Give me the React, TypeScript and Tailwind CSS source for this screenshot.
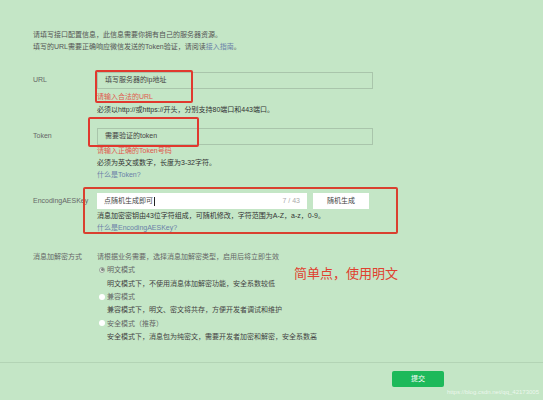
import React from "react";

function Radio({ checked, label }: { checked?: boolean; label: string }) {
  return (
    <div className="flex h-[13.33px] items-center">
      {checked ? (
        <span className="flex h-[6px] w-[6px] items-center justify-center rounded-full border border-[#9aa69b] bg-[#e8f1e8]">
          <span className="h-[3px] w-[3px] rounded-full bg-[#7c857d]" />
        </span>
      ) : (
        <span className="h-[6px] w-[6px] rounded-full bg-white" />
      )}
      <span className="ml-[2px] text-[#666]">{label}</span>
    </div>
  );
}

export default function App() {
  return (
    <div
      className="relative h-[400px] w-[543px] overflow-hidden bg-[#c4e6c6] text-[7px] text-[#444]"
      style={{ fontFamily: '"Liberation Sans", "Noto Sans CJK SC", sans-serif' }}
    >
      <div className="pl-[33px] pt-[29px]">
        {/* intro */}
        <div className="leading-[12px] text-[#555]">
          <p>请填写接口配置信息，此信息需要你拥有自己的服务器资源。</p>
          <p>
            填写的URL需要正确响应微信发送的Token验证，请阅读
            <span className="text-[#6a7fa8]">接入指南</span>。
          </p>
        </div>

        {/* URL */}
        <div className="mt-[19px] flex">
          <div className="flex h-[17px] w-[64px] items-center text-[#666]">URL</div>
          <div>
            <div className="flex h-[17px] w-[276px] items-center border border-[#a9c5ab] pl-[7px] text-[#444]">
              填写服务器的ip地址
            </div>
            <p className="mt-[2px] leading-[12px] text-[#e0594e]">请输入合法的URL</p>
            <p className="mt-[1px] leading-[12px] text-[#333]">
              必须以http://或https://开头，分别支持80端口和443端口。
            </p>
          </div>
        </div>

        {/* Token */}
        <div className="mt-[12px] flex">
          <div className="flex h-[17px] w-[64px] items-center text-[#666]">Token</div>
          <div>
            <div className="flex h-[17px] w-[276px] items-center border border-[#a9c5ab] pl-[7px] text-[#444]">
              需要验证的token
            </div>
            <div className="leading-[12px]">
              <p className="text-[#e0594e]">请输入正确的Token号码</p>
              <p className="text-[#333]">必须为英文或数字，长度为3-32字符。</p>
              <p className="text-[#6a7fa8]">什么是Token?</p>
            </div>
          </div>
        </div>

        {/* EncodingAESKey */}
        <div className="mt-[12px] flex">
          <div className="flex h-[16px] w-[64px] items-center text-[#666]">EncodingAESKey</div>
          <div>
            <div className="flex items-center">
              <div className="flex h-[16px] w-[210px] items-center justify-between bg-white px-[7px]">
                <span className="flex items-center text-[#444]">
                  点随机生成即可
                  <span className="ml-[1px] inline-block h-[9px] w-px bg-[#222]" />
                </span>
                <span className="text-[#aaa]">7 / 43</span>
              </div>
              <div className="ml-[6px] flex h-[16px] w-[56px] items-center justify-center bg-white text-[#444]">
                随机生成
              </div>
            </div>
            <div className="mt-[1px] leading-[12px]">
              <p className="text-[#333]">消息加密密钥由43位字符组成，可随机修改，字符范围为A-Z，a-z，0-9。</p>
              <p className="text-[#6a7fa8]">什么是EncodingAESKey?</p>
            </div>
          </div>
        </div>

        {/* 消息加解密方式 */}
        <div className="mt-[16px] flex leading-[13.33px]">
          <div className="w-[64px] text-[#666]">消息加解密方式</div>
          <div>
            <p className="text-[#666]">请根据业务需要，选择消息加解密类型，启用后将立即生效</p>
            <div className="pl-[2px]">
              <Radio checked label="明文模式" />
              <p className="pl-[8px] text-[#444]">明文模式下，不使用消息体加解密功能，安全系数较低</p>
              <Radio label="兼容模式" />
              <p className="pl-[8px] text-[#444]">兼容模式下，明文、密文将共存，方便开发者调试和维护</p>
              <Radio label="安全模式（推荐）" />
              <p className="pl-[8px] text-[#444]">安全模式下，消息包为纯密文，需要开发者加密和解密，安全系数高</p>
            </div>
          </div>
        </div>
      </div>

      {/* footer */}
      <div className="absolute left-0 right-0 top-[362px] border-t border-[#b3d4b5]" />
      <div className="absolute left-[392px] top-[371px] flex h-[16px] w-[52px] items-center justify-center rounded-[2px] bg-[#1db95a] text-white">
        提交
      </div>
      <div className="absolute right-[4px] top-[388px] text-[6px] text-white/70">
        https://blog.csdn.net/qq_42173005
      </div>

      {/* annotations */}
      <div className="absolute left-[95px] top-[70px] h-[33px] w-[98px] rounded-[2px] border-2 border-[#e0392e]" />
      <div className="absolute left-[88px] top-[117px] h-[30px] w-[111px] rounded-[2px] border-2 border-[#e0392e]" />
      <div className="absolute left-[83px] top-[187px] h-[47px] w-[315px] rounded-[2px] border-2 border-[#d9402f]" />
      <div className="absolute left-[294px] top-[265px] text-[13px] leading-[18px] text-[#e0402f]">
        简单点，使用明文
      </div>
    </div>
  );
}
